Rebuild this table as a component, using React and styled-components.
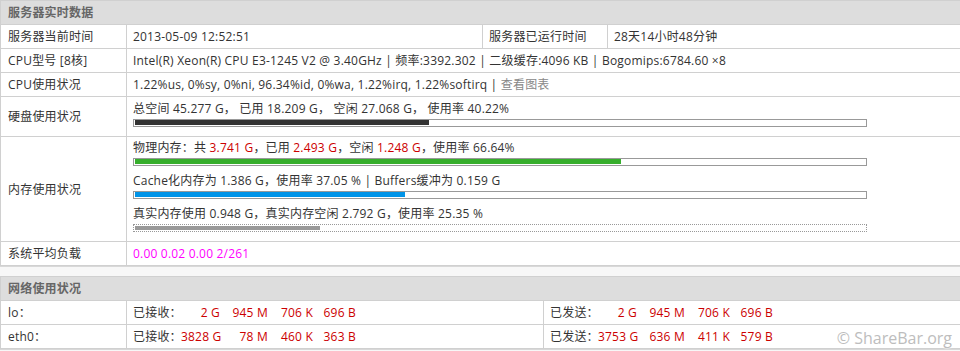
import styled, { createGlobalStyle } from "styled-components";

const GlobalStyle = createGlobalStyle`
html, body {
  margin: 0;
  padding: 0;
  background: #f7f7f7;
}
body {
  font-family: "Open Sans", "Noto Sans CJK SC", sans-serif;
  font-size: 12px;
  letter-spacing: 0.2px;
  color: #333;
}
`

const Page = styled.div`
position: relative;
width: 960px;
height: 351px;
overflow: hidden;
`

const Table = styled.table`
width: 960px;
border-collapse: collapse;
table-layout: fixed;
background: #fff;
border: 1px solid #d0d0d0;
box-shadow: 0 1px 0 #d8d8d8;
margin-top: ${props => props.$top || 0}px;
`

const Head = styled.th`
background: #ddd;
color: #666;
font-weight: bold;
text-align: left;
line-height: 23px;
padding: 0 7px;
border: 1px solid #d0d0d0;
`

const Label = styled.td`
line-height: 23px;
padding: 0 7px;
border: 1px solid #d0d0d0;
vertical-align: middle;
white-space: nowrap;
`

const Cell = styled.td`
line-height: 23px;
padding: ${props => props.$pad || "0 6px"};
border: 1px solid #d0d0d0;
vertical-align: top;
white-space: nowrap;
color: ${props => props.$color || "#333"};
`

const Line = styled.div`
line-height: 20px;
`

const Bar = styled.div`
box-sizing: border-box;
width: 734px;
height: 8px;
padding: ${props => props.$dotted ? "1px 1px 0" : "0 1px"};
border: 1px ${props => props.$dotted ? "dotted" : "solid"} #999;
margin-bottom: 5px;
`

const Fill = styled.div`
height: ${props => props.$dotted ? 4 : 5}px;
background: ${props => props.$color};
`

const Red = styled.span`
color: #cc0000;
`

const Muted = styled.span`
color: #888;
`

const Magenta = styled.span`
color: #f0f;
`

const NetLabel = styled.span`
display: inline-block;
width: 48px;
`

const NetValue = styled.span`
display: inline-block;
text-align: right;
color: #cc0000;
width: ${props => props.$w}px;
`

const Watermark = styled.div`
position: absolute;
right: 8px;
bottom: 2px;
font-family: "Open Sans", sans-serif;
font-size: 16px;
letter-spacing: 0;
color: #bdbdbd;
text-shadow: 0 0 2px #fff, 0 0 2px #fff;
`

const netWidths = [39, 48, 45, 43]

const Usage = ({ percent, color, dotted }) => (
  <Bar $dotted={dotted}>
    <Fill $color={color} $dotted={dotted} style={{ width: percent + "%" }} />
  </Bar>
)

const Traffic = ({ label, values }) => (
  <>
    <NetLabel>{label}</NetLabel>
    {values.map((v, i) => (
      <NetValue key={i} $w={netWidths[i]}>{v}</NetValue>
    ))}
  </>
)

const network = [
  { name: "lo：", rx: ["2 G", "945 M", "706 K", "696 B"], tx: ["2 G", "945 M", "706 K", "696 B"] },
  { name: "eth0：", rx: ["3828 G", "78 M", "460 K", "363 B"], tx: ["3753 G", "636 M", "411 K", "579 B"] },
]

const App = () => {
  return (
    <Page>
      <GlobalStyle />
      <Table>
        <colgroup>
          <col style={{ width: 126 }} />
          <col style={{ width: 356 }} />
          <col style={{ width: 125 }} />
          <col style={{ width: 353 }} />
        </colgroup>
        <tbody>
          <tr>
            <Head colSpan={4}>服务器实时数据</Head>
          </tr>
          <tr>
            <Label>服务器当前时间</Label>
            <Cell>2013-05-09 12:52:51</Cell>
            <Cell>服务器已运行时间</Cell>
            <Cell>28天14小时48分钟</Cell>
          </tr>
          <tr>
            <Label>CPU型号 [8核]</Label>
            <Cell colSpan={3}>
              Intel(R) Xeon(R) CPU E3-1245 V2 @ 3.40GHz | 频率:3392.302 | 二级缓存:4096 KB | Bogomips:6784.60 ×8
            </Cell>
          </tr>
          <tr>
            <Label>CPU使用状况</Label>
            <Cell colSpan={3}>
              1.22%us, 0%sy, 0%ni, 96.34%id, 0%wa, 1.22%irq, 1.22%softirq | <Muted>查看图表</Muted>
            </Cell>
          </tr>
          <tr>
            <Label>硬盘使用状况</Label>
            <Cell colSpan={3} $pad="2px 6px 4px">
              <Line>总空间 45.277 G， 已用 18.209 G， 空闲 27.068 G， 使用率 40.22%</Line>
              <Usage percent={40.22} color="#333" />
            </Cell>
          </tr>
          <tr>
            <Label>内存使用状况</Label>
            <Cell colSpan={3} $pad="1px 6px 4px">
              <Line>
                物理内存：共 <Red>3.741 G</Red>，已用 <Red>2.493 G</Red>，空闲 <Red>1.248 G</Red>，使用率 66.64%
              </Line>
              <Usage percent={66.64} color="#36ae2c" />
              <Line>Cache化内存为 1.386 G，使用率 37.05 % | Buffers缓冲为 0.159 G</Line>
              <Usage percent={37.05} color="#0094e8" />
              <Line>真实内存使用 0.948 G，真实内存空闲 2.792 G，使用率 25.35 %</Line>
              <Usage percent={25.35} color="#999" dotted />
            </Cell>
          </tr>
          <tr>
            <Label>系统平均负载</Label>
            <Cell colSpan={3}>
              <Magenta>0.00 0.02 0.00 2/261</Magenta>
            </Cell>
          </tr>
        </tbody>
      </Table>

      <Table $top={10}>
        <colgroup>
          <col style={{ width: 126 }} />
          <col style={{ width: 417 }} />
          <col style={{ width: 417 }} />
        </colgroup>
        <tbody>
          <tr>
            <Head colSpan={3}>网络使用状况</Head>
          </tr>
          {network.map(n => (
            <tr key={n.name}>
              <Label>{n.name}</Label>
              <Cell><Traffic label="已接收：" values={n.rx} /></Cell>
              <Cell><Traffic label="已发送：" values={n.tx} /></Cell>
            </tr>
          ))}
        </tbody>
      </Table>
      <Watermark>© ShareBar.org</Watermark>
    </Page>
  )
}

export default App
